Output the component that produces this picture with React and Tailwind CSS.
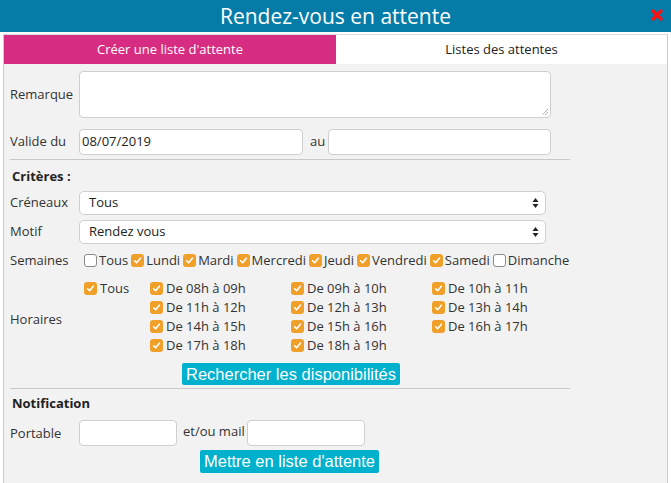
import React from "react";

const OS = { fontFamily: '"Open Sans", "Noto Sans", sans-serif' };
const BTN = { fontFamily: '"Liberation Sans", Arial, sans-serif' };

function Box({ checked }) {
  if (!checked)
    return <span className="inline-block w-[13px] h-[13px] rounded-[3px] border border-[#8a8a8a] bg-white shrink-0" />;
  return (
    <span className="inline-flex items-center justify-center w-[13px] h-[13px] rounded-[3px] bg-[#f0a029] shrink-0">
      <svg width="9" height="9" viewBox="0 0 9 9">
        <path d="M1.6 4.8 L3.6 6.8 L7.4 2.2" fill="none" stroke="white" strokeWidth="1.6" strokeLinecap="round" strokeLinejoin="round" />
      </svg>
    </span>
  );
}

function Check({ checked, label, gap = "gap-[2px]" }) {
  return (
    <span className={`inline-flex items-center whitespace-nowrap ${gap}`}>
      <Box checked={checked} />
      <span>{label}</span>
    </span>
  );
}

function Select({ value }) {
  return (
    <div className="w-[467px] h-[24px] rounded-[5px] border border-[#cfcfcf] bg-white flex items-center justify-between pl-[9px] pr-[6px] text-[13px] text-[#222]">
      <span>{value}</span>
      <svg width="7" height="12" viewBox="0 0 7 12">
        <path d="M3.5 1 L6.5 5 L0.5 5 Z" fill="#222" />
        <path d="M3.5 11 L6.5 7 L0.5 7 Z" fill="#222" />
      </svg>
    </div>
  );
}

const hours = [
  ["De 08h à 09h", "De 09h à 10h", "De 10h à 11h"],
  ["De 11h à 12h", "De 12h à 13h", "De 13h à 14h"],
  ["De 14h à 15h", "De 15h à 16h", "De 16h à 17h"],
  ["De 17h à 18h", "De 18h à 19h", null],
];

export default function App() {
  return (
    <div className="w-[671px] h-[483px] bg-white overflow-hidden text-[#333]" style={OS}>
      <div className="h-[32px] bg-[#057ca8] relative flex items-center justify-center">
        <span className="text-white text-[21px] leading-none">Rendez-vous en attente</span>
        <svg className="absolute right-[8px] top-[9px]" width="12" height="12" viewBox="0 0 12 12">
          <path d="M2 2 L10 10 M10 2 L2 10" stroke="#ff1010" strokeWidth="3.2" strokeLinecap="round" />
        </svg>
      </div>
      <div className="mt-[2px] mx-[3px] border-x border-[#cccccc] h-[449px] bg-[#f2f2f2]">
        <div className="flex h-[30px] text-[13px] border-t border-[#dcdcdc]">
          <div className="w-[332px] bg-[#d62d82] text-white flex items-center justify-center">Créer une liste d'attente</div>
          <div className="flex-1 bg-white text-[#222] flex items-center justify-center">Listes des attentes</div>
        </div>
        <div className="pl-[6px] text-[13px]">
          <div className="flex items-center mt-[7px]">
            <span className="w-[69px]">Remarque</span>
            <div className="w-[472px] h-[47px] rounded-[4px] border border-[#cfcfcf] bg-white relative">
              <svg className="absolute right-[1px] bottom-[1px]" width="8" height="8" viewBox="0 0 8 8">
                <path d="M7 1 L1 7 M7 4 L4 7" stroke="#777" strokeWidth="0.9" strokeDasharray="1 0.6" />
              </svg>
            </div>
          </div>
          <div className="flex items-center mt-[11px]">
            <span className="w-[69px]">Valide du</span>
            <div className="w-[224px] h-[26px] rounded-[4px] border border-[#cfcfcf] bg-white flex items-center pl-[2px] text-[#222]">08/07/2019</div>
            <span className="w-[25px] pl-[7px]">au</span>
            <div className="w-[223px] h-[26px] rounded-[4px] border border-[#cfcfcf] bg-white" />
          </div>
          <div className="mt-[4px] w-[560px] h-px bg-[#c8c8c8]" />
          <div className="mt-[8px] h-[17px] font-bold text-[#222] pl-[2px] leading-[17px]">Critères :</div>
          <div className="flex items-center mt-[6px]">
            <span className="w-[69px]">Créneaux</span>
            <Select value="Tous" />
          </div>
          <div className="flex items-center mt-[5px]">
            <span className="w-[69px]">Motif</span>
            <Select value="Rendez vous" />
          </div>
          <div className="flex items-center mt-[8px] h-[17px]">
            <span className="w-[74px]">Semaines</span>
            <div className="flex items-center gap-[3px]">
              <Check checked={false} label="Tous" />
              <Check checked label="Lundi" />
              <Check checked label="Mardi" />
              <Check checked label="Mercredi" />
              <Check checked label="Jeudi" />
              <Check checked label="Vendredi" />
              <Check checked label="Samedi" />
              <Check checked={false} label="Dimanche" />
            </div>
          </div>
          <div className="flex items-center mt-[10px]">
            <span className="w-[74px] pt-[6px]">Horaires</span>
            <div className="w-[66px] self-start h-[19px] flex items-center">
              <Check checked label="Tous" gap="gap-[3px]" />
            </div>
            <div className="flex flex-col">
              {hours.map((row, i) => (
                <div key={i} className="flex h-[19px] items-center">
                  {row.map((h, j) => (
                    <div key={j} className="w-[141px]">{h && <Check checked label={h} gap="gap-[3px]" />}</div>
                  ))}
                </div>
              ))}
            </div>
          </div>
          <div className="flex mt-[8px] pl-[172px]">
            <div className="h-[22px] px-[4px] rounded-[2px] bg-[#00b1cd] text-white text-[16.5px] flex items-center" style={BTN}>
              Rechercher les disponibilités
            </div>
          </div>
          <div className="mt-[3px] w-[560px] h-px bg-[#c8c8c8]" />
          <div className="mt-[6px] h-[17px] font-bold text-[#222] pl-[2px] leading-[17px]">Notification</div>
          <div className="flex items-center mt-[8px]">
            <span className="w-[69px] pt-[2px]">Portable</span>
            <div className="w-[98px] h-[26px] rounded-[4px] border border-[#cfcfcf] bg-white" />
            <span className="w-[70px] pl-[6px] pb-[2px]">et/ou mail</span>
            <div className="w-[118px] h-[26px] rounded-[4px] border border-[#cfcfcf] bg-white" />
          </div>
          <div className="flex mt-[4px] pl-[190px]">
            <div className="h-[23px] px-[4px] rounded-[2px] bg-[#00b1cd] text-white text-[16.5px] flex items-center" style={BTN}>
              Mettre en liste d'attente
            </div>
          </div>
        </div>
      </div>
    </div>
  );
}
